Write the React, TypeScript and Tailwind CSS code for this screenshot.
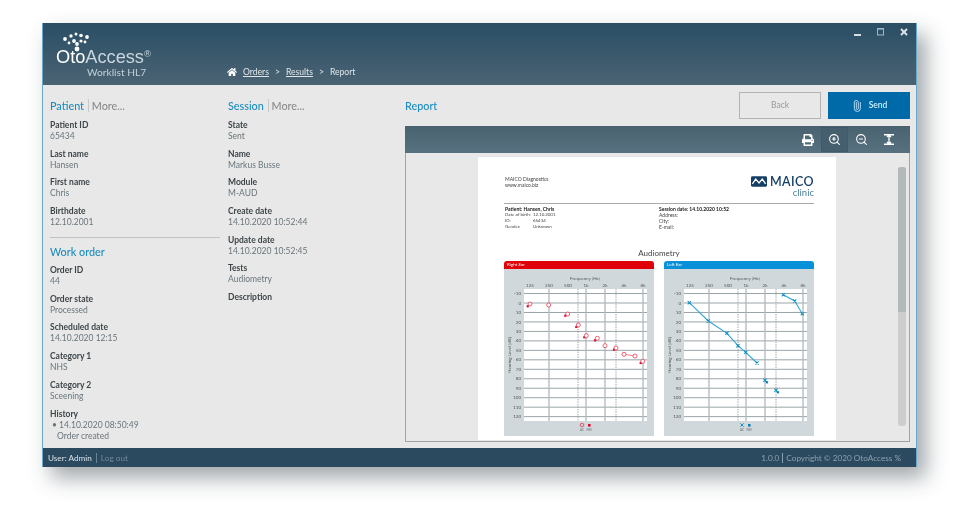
import { FaHome, FaPrint } from "react-icons/fa";
import { Paperclip, ZoomIn, ZoomOut } from "lucide-react";

type Pt = [number, number];

const rows = [-10, 0, 10, 20, 30, 40, 50, 60, 70, 80, 90, 100, 110, 120];
const freqs: [string, number][] = [
  ["125", 26],
  ["250", 45],
  ["500", 64],
  ["1k", 82],
  ["2k", 101],
  ["4k", 120],
  ["8k", 139],
];

function Field({ label, value }: { label: string; value?: string }) {
  return (
    <div className="leading-[11px]">
      <div className="font-bold text-[#3d4549]">{label}</div>
      {value && <div className="text-[#68757c]">{value}</div>}
    </div>
  );
}

function Audiogram({
  title,
  color,
  side,
  main,
  extra,
}: {
  title: string;
  color: string;
  side: "right" | "left";
  main: Pt[][];
  extra: [Pt, Pt][];
}) {
  const y = (db: number) => 34 + db * 0.947;
  const line = side === "right" ? "#f08a8a" : "#2fa8d4";
  const dot = side === "right" ? "#d81030" : "#1180b0";
  return (
    <div className="w-[150px]">
      <div
        className="h-[8px] rounded-t-[3px] pl-[3px] text-[4.5px] leading-[8px] text-white"
        style={{ background: color }}
      >
        {title}
      </div>
      <svg width="150" height="167" viewBox="0 0 150 167" className="block bg-[#d0d8dc]">
        <text x="81" y="11" fontSize="4.5" textAnchor="middle" fill="#555">
          Frequency [Hz]
        </text>
        <rect x="20" y="20" width="123" height="132" fill="#fff" />
        {rows.map((r) => (
          <g key={r}>
            <line x1="20" x2="143" y1={y(r)} y2={y(r)} stroke="#9aa4a8" strokeWidth="1" />
            <text x="17" y={y(r) + 1.6} fontSize="4.5" textAnchor="end" fill="#555">
              {r}
            </text>
          </g>
        ))}
        {freqs.map(([f, x]) => (
          <g key={f}>
            <text x={x} y="18" fontSize="4.5" textAnchor="middle" fill="#555">
              {f}
            </text>
            {f !== "125" && f !== "500" && f !== "4k" && (
              <line x1={x} x2={x} y1="20" y2="152" stroke="#b0b8bc" strokeWidth="1.3" />
            )}
          </g>
        ))}
        {[74, 112].map((x) => (
          <line key={x} x1={x} x2={x} y1="20" y2="152" stroke="#9aa0a2" strokeWidth="0.9" strokeDasharray="1.5 1" />
        ))}
        <text
          transform="translate(7 86) rotate(-90)"
          fontSize="4.5"
          textAnchor="middle"
          fill="#555"
        >
          Hearing Level [dB]
        </text>
        {main.map((seg, i) => (
          <polyline
            key={i}
            points={seg.map((p) => p.join(",")).join(" ")}
            fill="none"
            stroke={line}
            strokeWidth="1.1"
          />
        ))}
        {extra.map(([a, b], i) => (
          <g key={i}>
            <line x1={a[0]} y1={a[1]} x2={b[0]} y2={b[1]} stroke={line} strokeWidth="1.1" />
            <rect x={b[0] - 1.1} y={b[1] - 1.1} width="2.2" height="2.2" fill={dot} />
          </g>
        ))}
        {main.flat().concat(extra.map((e) => e[0])).map((p, i) =>
          side === "right" ? (
            <circle key={i} cx={p[0]} cy={p[1]} r="2" fill="#fff" stroke="#e8384f" strokeWidth="0.8" />
          ) : (
            <path
              key={i}
              d={`M${p[0] - 1.6} ${p[1] - 1.6}l3.2 3.2M${p[0] + 1.6} ${p[1] - 1.6}l-3.2 3.2`}
              stroke="#1590c0"
              strokeWidth="1.1"
            />
          ),
        )}
        {side === "right" ? (
          <>
            <circle cx="78" cy="156" r="1.8" fill="none" stroke="#e8384f" strokeWidth="0.8" />
            <rect x="84" y="155" width="2.6" height="2.6" fill="#d81030" />
          </>
        ) : (
          <>
            <path d="M76.4 154.4l3.2 3.2M79.6 154.4l-3.2 3.2" stroke="#1590c0" strokeWidth="1" />
            <rect x="84" y="155" width="2.6" height="2.6" fill="#1180b0" />
          </>
        )}
        <text x="78" y="162" fontSize="3" textAnchor="middle" fill="#666">
          AC
        </text>
        <text x="85" y="162" fontSize="3" textAnchor="middle" fill="#666">
          NM
        </text>
      </svg>
    </div>
  );
}

function Sheet() {
  return (
    <div className="mt-[4px] h-[283px] w-[358px] shrink-0 overflow-hidden bg-white pl-[26px] pr-[22px] pt-[19px] text-[5px] leading-[6px] text-[#444] blur-[0.3px]">
      <div className="flex h-[27px] items-start justify-between pl-px">
        <div>
          <div>MAICO Diagnostics</div>
          <div>www.maico.biz</div>
        </div>
        <div className="flex flex-col items-end">
          <div className="flex h-[11px] items-center gap-[3px]">
            <svg width="16" height="11" viewBox="0 0 17 11">
              <rect width="17" height="11" rx="1.5" fill="#163f66" />
              <path d="M1.5 8 5 3l3.5 4L12 3l3.5 5" fill="none" stroke="#fff" strokeWidth="1.4" />
            </svg>
            <span className="text-[12.5px] font-semibold leading-[11px] tracking-[0.4px] text-[#163f66]">
              MAICO
            </span>
          </div>
          <span className="mt-[1px] text-[9.5px] leading-[10px] text-[#4a7f96]">clinic</span>
        </div>
      </div>
      <div className="flex border-t border-[#aaaaaa] pt-[2px] pl-px">
        <div className="w-[154px] whitespace-nowrap text-[4.4px]">
          <div className="text-[5px] font-bold text-[#222]">Patient: Hansen, Chris</div>
          <div className="flex"><span className="w-[28px]">Date of birth:</span><span>12.10.2001</span></div>
          <div className="flex"><span className="w-[28px]">ID:</span><span>65434</span></div>
          <div className="flex"><span className="w-[28px]">Gender:</span><span>Unknown</span></div>
        </div>
        <div className="whitespace-nowrap">
          <div className="font-bold text-[#222]">Session date: 14.10.2020 10:52</div>
          <div>Address:</div>
          <div>City:</div>
          <div>E-mail:</div>
        </div>
      </div>
      <div className="mt-[18px] mb-[3px] text-center text-[8px] leading-[10px] text-[#444]">Audiometry</div>
      <div className="flex gap-[10px]">
        <Audiogram
          title="Right Ear"
          color="#e00008"
          side="right"
          main={[
            [[44.7, 36]],
            [[101, 76.7]],
            [[120, 85.3], [131, 87]],
          ]}
          extra={[
            [[26, 35], [23.7, 37.3]],
            [[63.7, 45], [61.3, 46.7]],
            [[74.3, 56], [72.3, 58]],
            [[82.3, 66.7], [80.3, 68.3]],
            [[93.3, 69.3], [91, 71.3]],
            [[112, 79], [110, 80.7]],
            [[138.7, 92.3], [136.7, 94]],
          ]}
        />
        <Audiogram
          title="Left Ear"
          color="#0890d8"
          side="left"
          main={[
            [[25.3, 33.7], [44.3, 52], [63, 64.3], [74, 76.7], [81.7, 83.3], [93, 94]],
            [[119.3, 25.7], [130.7, 32], [138.3, 44.7]],
          ]}
          extra={[
            [[101, 111.3], [103, 113.3]],
            [[112, 121.3], [114, 123.3]],
          ]}
        />
      </div>
    </div>
  );
}

export default function App() {
  return (
    <div className="h-[525px] w-[960px] overflow-hidden bg-white pl-[42px] pt-[23px] font-['Lato',sans-serif]">
      <div className="flex h-[444px] w-[875px] flex-col border-x border-[#6aa9c9] shadow-[9px_11px_20px_rgba(30,45,55,0.42)] blur-[0.25px]">
        {/* header */}
        <div className="flex h-[62px] shrink-0 bg-gradient-to-b from-[#2a4e65] to-[#4a6373] text-white">
          <div className="w-[184px] pl-[13px] pt-[9px]">
            <svg width="30" height="20" viewBox="0 0 30 20" className="ml-[7px]">
              {[
                [2, 7, 1.9], [8, 4, 1.7], [13, 2, 1.5], [18, 3.5, 1.8], [24, 5, 1.9],
                [11, 9, 1.9], [18, 9, 1.6], [6, 11, 1.4], [14, 12, 1.9], [22, 10, 1.4], [14, 17, 2.4],
              ].map(([cx, cy, r], i) => (
                <circle key={i} cx={cx} cy={cy} r={r} fill="#fff" />
              ))}
            </svg>
            <div className="-mt-[5px] h-[20px] whitespace-nowrap text-[18.2px] leading-[20px] font-['Liberation_Sans',sans-serif]">
              <span>Oto</span>
              <span className="text-[#c9d6de]">Access</span>
              <span className="align-[6px] text-[9.5px] leading-none text-[#c9d6de]">®</span>
            </div>
            <div className="ml-[31px] -mt-[1px] text-[10.2px] leading-[12px] text-[#c4d0d8]">Worklist HL7</div>
          </div>
          <div className="flex items-end pb-[7px] text-[8.6px] leading-[12px] text-[#dfe6ea]">
            <FaHome className="mr-[6px] mb-[1px] text-[10px] text-white" />
            <span className="underline">Orders</span>
            <span className="mx-[6px]">&gt;</span>
            <span className="underline">Results</span>
            <span className="mx-[6px]">&gt;</span>
            <span>Report</span>
          </div>
          <div className="ml-auto mr-[8px] mt-[5px] flex h-[12px] items-start gap-[16px]">
            <svg width="7" height="10" viewBox="0 0 7 10"><rect y="6" width="7" height="2" fill="#d5dde2" /></svg>
            <svg width="7" height="8" viewBox="0 0 7 8"><rect x="0.5" y="0.5" width="6" height="6.5" fill="none" stroke="#a8b6be" /><rect width="7" height="1.6" fill="#a8b6be" /></svg>
            <svg width="8" height="8" viewBox="0 0 8 8"><path d="M1 1l6 6M7 1l-6 6" stroke="#e0e6ea" strokeWidth="1.8" /></svg>
          </div>
        </div>

        {/* main */}
        <div className="flex min-h-0 flex-1 bg-[#e8e8e8] pb-[6px] pl-[7px] pr-[6px] pt-[13px] text-[8.5px]">
          <div className="flex w-[170px] shrink-0 flex-col">
            <h2 className="mb-[6px] text-[10.8px] leading-[16px] font-medium text-[#1b8cbd]">
              Patient <span className="ml-[1px] border-l border-[#c8c8c8] pl-[3px] text-[#8b8b8b]">More...</span>
            </h2>
            <div className="flex flex-col gap-[6.7px]">
              <Field label="Patient ID" value="65434" />
              <Field label="Last name" value="Hansen" />
              <Field label="First name" value="Chris" />
              <Field label="Birthdate" value="12.10.2001" />
            </div>
            <div className="mt-[9px] border-t border-[#c2c2c2] pt-[6px]">
              <h2 className="mb-[5px] text-[10.8px] leading-[16px] font-medium text-[#1b8cbd]">Work order</h2>
              <div className="flex flex-col gap-[6.7px]">
                <Field label="Order ID" value="44" />
                <Field label="Order state" value="Processed" />
                <Field label="Scheduled date" value="14.10.2020 12:15" />
                <Field label="Category 1" value="NHS" />
                <Field label="Category 2" value="Sceening" />
                <div className="leading-[11px] text-[#68757c]">
                  <div className="font-bold text-[#3d4549]">History</div>
                  <div className="pl-[2px]">• 14.10.2020 08:50:49</div>
                  <div className="pl-[7px]">Order created</div>
                </div>
              </div>
            </div>
          </div>

          <div className="ml-[8px] flex w-[177px] shrink-0 flex-col">
            <h2 className="mb-[6px] text-[10.8px] leading-[16px] font-medium text-[#1b8cbd]">
              Session <span className="ml-[1px] border-l border-[#c8c8c8] pl-[3px] text-[#8b8b8b]">More...</span>
            </h2>
            <div className="flex flex-col gap-[6.7px]">
              <Field label="State" value="Sent" />
              <Field label="Name" value="Markus Busse" />
              <Field label="Module" value="M-AUD" />
              <Field label="Create date" value="14.10.2020 10:52:44" />
              <Field label="Update date" value="14.10.2020 10:52:45" />
              <Field label="Tests" value="Audiometry" />
              <Field label="Description" />
            </div>
          </div>

          <div className="flex min-w-0 flex-1 flex-col">
            <div className="-mt-[6px] flex h-[27px] shrink-0 items-center gap-[7px]">
              <h2 className="mr-auto text-[10.8px] leading-[16px] font-medium text-[#1b8cbd]">Report</h2>
              <button className="h-[27px] w-[82px] border border-[#b4b4b4] text-[8.5px] text-[#9a9a9a]">Back</button>
              <button className="flex h-[27px] w-[82px] items-center justify-center gap-[6px] bg-[#0069a8] text-[8.5px] font-semibold text-[#cfeeff]">
                <Paperclip size={12} strokeWidth={1.6} className="-rotate-45" />
                Send
              </button>
            </div>
            <div className="mt-[7px] flex h-[27px] shrink-0 items-center justify-end bg-gradient-to-b from-[#48626f] to-[#587180] pr-[8px] text-white">
              <span className="flex h-[27px] w-[27px] items-center justify-center"><FaPrint className="text-[12px]" /></span>
              <span className="flex h-[25px] w-[27px] items-center justify-center border border-dotted border-[#3d5562] bg-[#465f6e]"><ZoomIn size={13} strokeWidth={2} /></span>
              <span className="flex h-[27px] w-[27px] items-center justify-center"><ZoomOut size={13} strokeWidth={2} /></span>
              <span className="flex h-[27px] w-[27px] items-center justify-center">
                <svg width="10" height="11" viewBox="0 0 10 11">
                  <path d="M0 .75h10M0 10.25h10M5 1v9M3 3l2-2 2 2M3 8l2 2 2-2" fill="none" stroke="#fff" strokeWidth="1.3" />
                </svg>
              </span>
            </div>
            <div className="flex min-h-0 flex-1 border border-[#a3a3a3] border-t-0 bg-[#e8e8e8] pl-[72px]">
              <Sheet />
              <div className="ml-[62px] mt-[14px] h-[259px] w-[8px] shrink-0 overflow-hidden rounded-[3px] bg-[#cdcdcd]">
                <div className="h-[145px] bg-[#b3b8b9]" />
              </div>
            </div>
          </div>
        </div>

        {/* footer */}
        <div className="flex h-[19px] shrink-0 items-center bg-[#2c4a5f] pl-[5px] pr-[15px] text-[8.2px] leading-[12px]">
          <span className="text-[#d9e2e8]">User: Admin</span>
          <span className="mx-[4px] h-[10px] border-l border-[#6b8292]" />
          <span className="text-[#70899a]">Log out</span>
          <span className="ml-auto text-[#8ba0ae]">1.0.0</span>
          <span className="mx-[3px] h-[10px] border-l border-[#8ba0ae]" />
          <span className="text-[#8ba0ae]">Copyright © 2020 OtoAccess %</span>
        </div>
      </div>
    </div>
  );
}
